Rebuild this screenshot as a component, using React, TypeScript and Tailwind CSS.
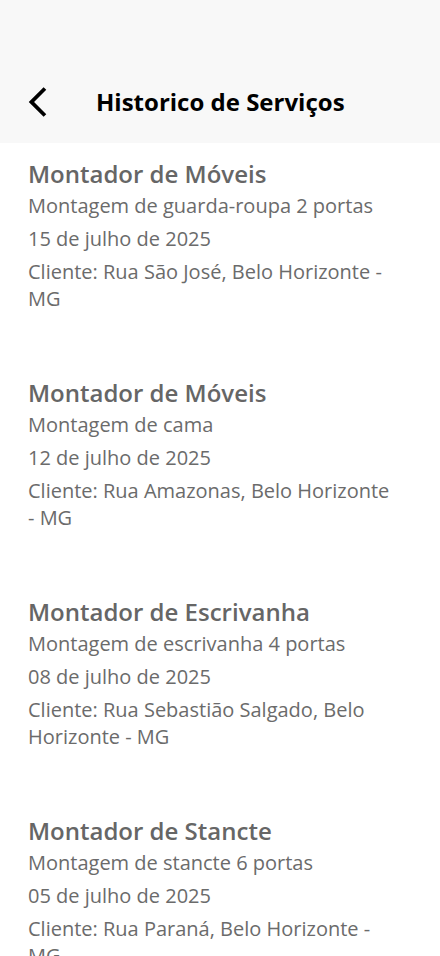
import React from 'react';

const services = [
  {
    title: 'Montador de Móveis',
    description: 'Montagem de guarda-roupa 2 portas',
    date: '15 de julho de 2025',
    client: 'Cliente: Rua São José, Belo Horizonte - MG',
  },
  {
    title: 'Montador de Móveis',
    description: 'Montagem de cama',
    date: '12 de julho de 2025',
    client: 'Cliente: Rua Amazonas, Belo Horizonte - MG',
  },
  {
    title: 'Montador de Escrivanha',
    description: 'Montagem de escrivanha 4 portas',
    date: '08 de julho de 2025',
    client: 'Cliente: Rua Sebastião Salgado, Belo Horizonte - MG',
  },
  {
    title: 'Montador de Stancte',
    description: 'Montagem de stancte 6 portas',
    date: '05 de julho de 2025',
    client: 'Cliente: Rua Paraná, Belo Horizonte - MG',
  },
];

const App = () => {
  return (
    <div className="h-[956px] w-[440px] overflow-hidden bg-white font-['Open_Sans',sans-serif]">
      {/* Header */}
      <header className="flex h-[143px] items-end bg-[#f8f8f8] pb-[23px]">
        <div className="flex items-center pl-[20px]">
          <svg width="36" height="36" viewBox="0 0 24 24" fill="#000">
            <path d="M17.51 3.87L15.73 2.1 5.84 12l9.9 9.9 1.77-1.77L9.38 12l8.13-8.13z" />
          </svg>
          <h1 className="ml-[40px] text-[24px] font-bold leading-[32px] text-black">
            Historico de Serviços
          </h1>
        </div>
      </header>

      {/* Lista */}
      <div className="flex flex-col gap-[66px] pl-[28px] pr-[44px] pt-4">
        {services.map((item, index) => (
          <div key={index} className="flex flex-col text-[#6b6b6b]">
            <h2 className="mb-[3px] text-[24px] font-semibold leading-[30px] text-[#666]">
              {item.title}
            </h2>
            <p className="text-[20px] leading-[27px]">{item.description}</p>
            <p className="mt-[6px] text-[20px] leading-[27px]">{item.date}</p>
            <p className="mt-[6px] text-[20px] leading-[27px]">{item.client}</p>
          </div>
        ))}
      </div>
    </div>
  );
};

export default App;
